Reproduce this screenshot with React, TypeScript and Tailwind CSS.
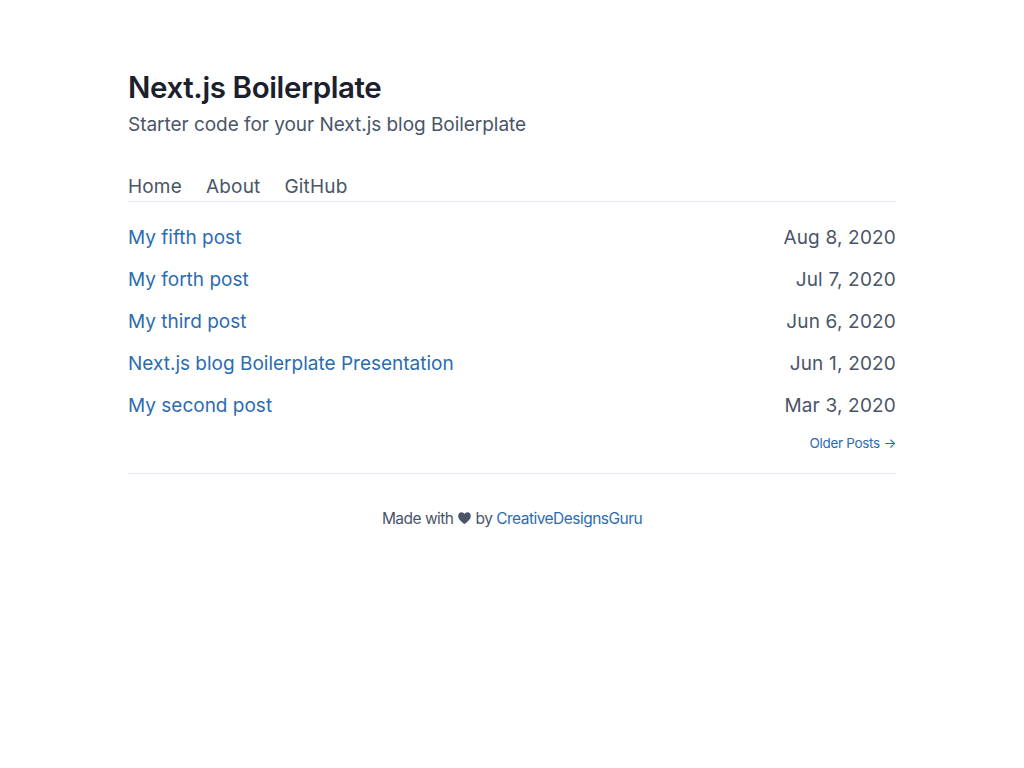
const posts = [
  ["My fifth post", "Aug 8, 2020"],
  ["My forth post", "Jul 7, 2020"],
  ["My third post", "Jun 6, 2020"],
  ["Next.js blog Boilerplate Presentation", "Jun 1, 2020"],
  ["My second post", "Mar 3, 2020"],
];

function Heart() {
  return (
    <svg viewBox="0 0 13 12" className="mr-[4px] ml-[5px] inline-block h-[12px] w-[13px] align-[0px]" fill="currentColor" role="img" aria-label="love">
      <path d="M6.5 11.9C3.2 9.7.2 7 .2 3.9.2 1.8 1.6.3 3.4.3c1.4 0 2.5.7 3.1 1.9C7.1 1 8.2.3 9.6.3c1.8 0 3.2 1.5 3.2 3.6 0 3.1-3 5.8-6.3 8z" />
    </svg>
  );
}

export default function App() {
  return (
    <div className="w-full bg-white px-3 font-['Inter',sans-serif] text-[#4a5568] antialiased">
      <div className="mx-auto max-w-screen-md">
        <header className="border-b border-[#e2e8f0]">
          <div className="pt-16 pb-8">
            <h1 className="pb-[2px] text-[29.5px] leading-[46px] font-semibold tracking-[-0.38px] text-[#1a202c]">Next.js Boilerplate</h1>
            <p className="text-[19px] leading-[26px] tracking-[-0.04px]">Starter code for your Next.js blog Boilerplate</p>
          </div>
          <nav className="flex gap-6 pt-[2px] text-[19px] leading-[29px] tracking-[0.18px]">
            <a href="#">Home</a>
            <a href="#">About</a>
            <a href="#">GitHub</a>
          </nav>
        </header>
        <main className="pt-[21px] text-[19px]">
          <ul>
            {posts.map(([title, date]) => (
              <li key={title} className="mb-3 flex justify-between leading-[30px]">
                <a href="#" className="text-[#2b6cb0]">{title}</a>
                <span className="tracking-[0.18px]">{date}</span>
              </li>
            ))}
          </ul>
          <div className="flex justify-end text-[13.5px] leading-5 tracking-[-0.3px]">
            <a href="#" className="text-[#2b6cb0]">Older Posts →</a>
          </div>
        </main>
        <footer className="mt-5 border-t border-[#e2e8f0] pt-[33px] pb-8 text-center text-[15.5px] leading-6 tracking-[-0.52px]">
          Made with<Heart />by <a href="#" className="text-[#2b6cb0]">CreativeDesignsGuru</a>
        </footer>
      </div>
    </div>
  );
}
